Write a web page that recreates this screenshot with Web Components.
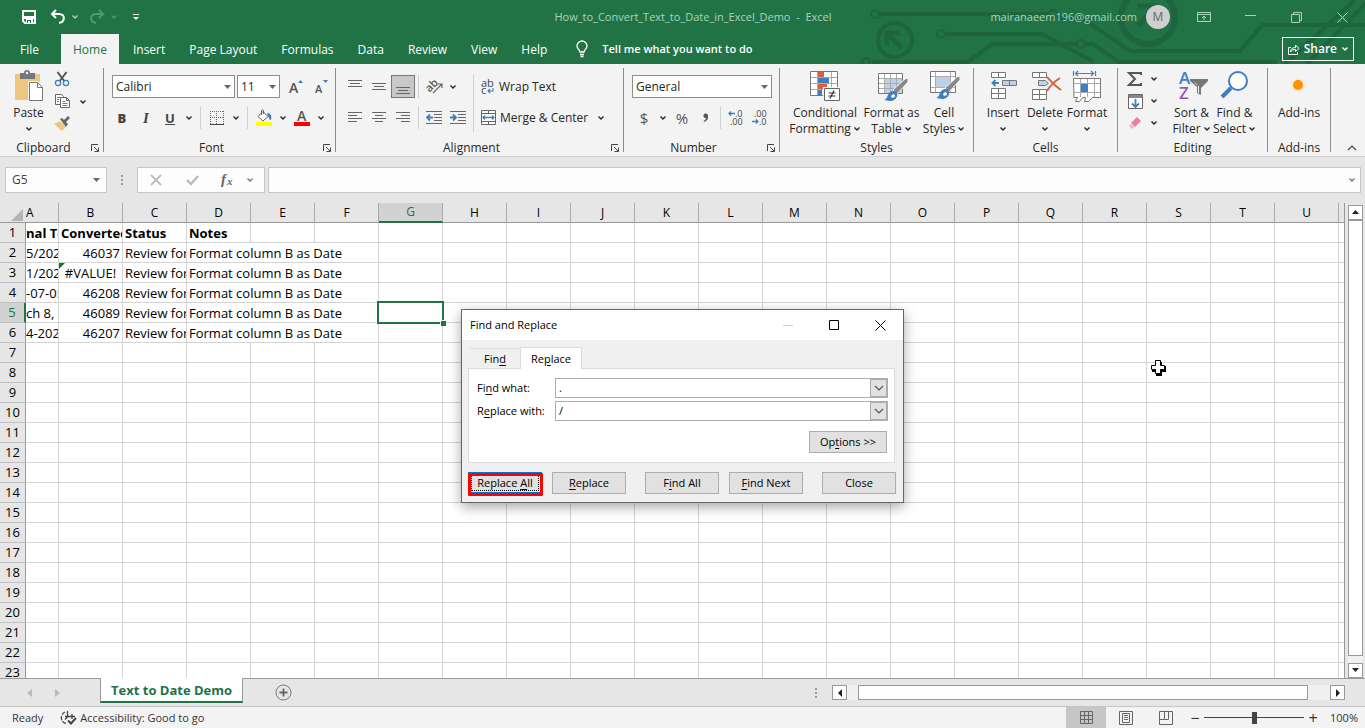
<!DOCTYPE html>
<html lang="en">
<head>
<meta charset="utf-8">
<title>How_to_Convert_Text_to_Date_in_Excel_Demo - Excel</title>
<style>
    html, body {
        height: 100%;
        margin: 0;
    }
    body {
        --green: #217346;
        --edge: #999999;
        font-family: "Open Sans", "Noto Sans", sans-serif;
        font-size: 12px;
        line-height: 16px;
        color: #262626;
        overflow: hidden;
    }
</style>
</head>
<body>
<excel-app></excel-app>

<script>
// Icons: [width, height, svg content]
const ICONS = {
    save: [16, 16, '<path fill="none" stroke="#fff" stroke-width="2" d="M2 2h12v12H4l-2-2z"/><path fill="#fff" d="M2 7h12v3H2zM5 10h7v4H5z"/><path fill="#217346" d="M6 11h4v3H6z"/><path fill="#fff" d="M7 12h2v2H7z"/>'],
    undo: [16, 16, '<path fill="none" stroke="#fff" stroke-width="2" d="M6 1L2 5l4 4M2 5h7c7 0 6 8 0 9"/>'],
    redo: [16, 16, '<path fill="none" stroke="#4f9a70" stroke-width="2" d="M10 1l4 4-4 4M14 5H7c-7 0-6 8 0 9"/>'],
    customize: [8, 8, '<path stroke="#fff" d="M1 1.500h6"/><path fill="#fff" d="M1 4h6L4 7z"/>'],
    chevron: [8, 6, '<path fill="none" stroke="currentColor" stroke-width="1.400" d="M1.500 1.500L4 4l2.500-2.500"/>'],
    chevronUp: [10, 6, '<path fill="none" stroke="#444" stroke-width="1.200" d="M1 5l4-4 4 4"/>'],
    arrow: [7, 4, '<path fill="#666" d="M0 0h7L3.500 4z"/>'],
    bulb: [14, 18, '<path fill="none" stroke="#fff" stroke-width="1.300" d="M5 12c0-2-3-3-3-6a5 5 0 0 1 10 0c0 3-3 4-3 6zM5 14.500h4M5.500 16.500h3"/>'],
    share: [13, 13, '<path fill="none" stroke="#fff" d="M4 4.500H1.500v7h9V9M3.500 9c0-3 2-4.500 5-4.500V2L12 5.500 8.500 8.500V6.500c-2 0-4 .5-5 2.500z"/>'],
    ribbonOptions: [14, 12, '<g fill="none" stroke="#a9d3bb"><path d="M.5 1.500h13v9H.5zM.5 3.500h13M7 9.500v-4M5 7l2-2 2 2"/></g>'],
    minimize: [11, 11, '<path stroke="#a9d3bb" d="M0 3.500h11"/>'],
    restore: [11, 11, '<path fill="none" stroke="#a9d3bb" d="M.5 2.500h8v8h-8zM2.500 2.500v-2h8v8h-2"/>'],
    close: [11, 11, '<path stroke="#a9d3bb" d="M.5.5l10 10M10.500.5l-10 10"/>'],
    paste: [30, 32, '<path fill="#edc77f" d="M1 4h25v26H1z"/><path fill="#777" d="M6 3h4a3 3 0 0 1 6 0h5v6H6z"/><circle cx="13" cy="3" r="1.200" fill="#f3f3f3"/><path fill="#fff" stroke="#f3f3f3" stroke-width="3" d="M15.500 12.500h8l5 5v13h-13z"/><path fill="#fff" stroke="#777" d="M15.500 12.500h8l5 5v13h-13zM23.500 12.500v5h5"/>'],
    cut: [16, 16, '<path stroke="#555" stroke-width="2" d="M3.500 1l7.500 10M12.500 1L5 11"/><g fill="#f3f3f3" stroke="#3f7fbf" stroke-width="1.300"><circle cx="4" cy="12" r="2.600"/><circle cx="12" cy="12" r="2.600"/></g>'],
    copy: [16, 16, '<g fill="#fff" stroke="#666"><path d="M1.500 1.500h6l2 2v8h-8z"/><path d="M6.500 4.500h6l3 3v7h-9zM12.500 4.500v3h3"/></g><path stroke="#3f7fbf" d="M3 4.500h3M3 6.500h2M3 8.500h2M8.500 8.500h3M8.500 10.500h5M8.500 12.500h5"/>'],
    painter: [16, 16, '<path fill="#edc77f" d="M0 9l6-3 6 6-4 4z"/><path fill="#666" d="M6 4l2-1 2 2 4-4 2 2-4 4 2 2-2 3z"/>'],
    grow: [14, 16, '<text x="0" y="14" font-family="Open Sans" font-size="14" font-weight="600" fill="#555">A</text><path fill="#3f7fbf" d="M9 4h5L11.500 1z"/>'],
    shrink: [14, 16, '<text x="0" y="14" font-family="Open Sans" font-size="11" font-weight="600" fill="#555">A</text><path fill="#3f7fbf" d="M8 1h5L10.500 4z"/>'],
    border: [14, 14, '<path fill="none" stroke="#666" stroke-dasharray="1 1" d="M.5 0v13M6.500 0v13M13.500 0v13M0 .5h14M0 6.500h14"/><path stroke="#444" stroke-width="1" d="M0 13.500h14"/>'],
    fill: [16, 17, '<path fill="#fff" stroke="#666" d="M2 7.500l5-5 5 5-5 4.500zM5.500 6V1.500c0-1 2-1 2 0V5"/><path fill="#3f7fbf" d="M11 4c4 0 5 3 4 7-2 0-2-3-3-4z"/><path fill="#ff0" d="M0 13h16v4H0z"/>'],
    fontColor: [16, 17, '<text x="3" y="12" font-family="Open Sans" font-size="14" font-weight="600" fill="#555">A</text><path fill="#f00" d="M0 13h16v4H0z"/>'],
    alignTop: [14, 14, '<path stroke="#666" d="M0 .5h14M2 3.500h10M0 6.500h14"/>'],
    alignMiddle: [14, 14, '<path stroke="#666" d="M0 3.500h14M2 6.500h10M0 9.500h14"/>'],
    alignBottom: [14, 14, '<path stroke="#666" d="M0 7.500h14M2 10.500h10M0 13.500h14"/>'],
    alignLeft: [14, 14, '<path stroke="#666" d="M0 1.500h14M0 4.500h9M0 7.500h14M0 10.500h9"/>'],
    alignCenter: [14, 14, '<path stroke="#666" d="M0 1.500h14M3 4.500h8M0 7.500h14M3 10.500h8"/>'],
    alignRight: [14, 14, '<path stroke="#666" d="M0 1.500h14M5 4.500h9M0 7.500h14M5 10.500h9"/>'],
    orientation: [17, 17, '<text x="0" y="12" font-family="Open Sans" font-size="11" font-weight="600" fill="#555" transform="rotate(-45 5 9)">ab</text><path fill="none" stroke="#666" stroke-width="1.200" d="M7 15l9-9M12 6h4v4"/>'],
    outdent: [16, 14, '<path stroke="#666" d="M0 .5h16M8 3.500h8M8 6.500h8M8 9.500h8M0 12.500h16"/><path fill="none" stroke="#3f7fbf" stroke-width="1.800" d="M7 6.500H1M4 3.500l-3 3 3 3"/>'],
    indent: [16, 14, '<path stroke="#666" d="M0 .5h16M8 3.500h8M8 6.500h8M8 9.500h8M0 12.500h16"/><path fill="none" stroke="#3f7fbf" stroke-width="1.800" d="M0 6.500h6M3 3.500l3 3-3 3"/>'],
    wrap: [14, 16, '<g font-family="Open Sans" font-size="11" fill="#444"><text x="0" y="8">ab</text><text x="0" y="15">c</text></g><path fill="none" stroke="#3f7fbf" stroke-width="1.200" d="M12 9v3H7M9 10l-2 2 2 2"/>'],
    merge: [15, 15, '<path fill="#fff" stroke="#666" d="M.5.5h14v14H.5zM.5 3.500h14M.5 11.500h14M7.500.5v3M7.500 11.500v3"/><path fill="none" stroke="#3f7fbf" stroke-width="1.300" d="M2 7.500h11M4 5.500l-2 2 2 2M11 5.500l2 2-2 2"/>'],
    comma: [6, 9, '<circle cx="2.700" cy="2.700" r="2.300" fill="#555"/><path fill="#555" d="M5 2.500C5.500 6 4 8 1 9l-.4-1C2.500 7 3 6 3 4z"/>'],
    moreDecimal: [15, 16, '<g font-family="Open Sans" font-size="9" fill="#444"><text x="7" y="7">.0</text><text x="2" y="15">.00</text></g><path fill="none" stroke="#3f7fbf" stroke-width="1.300" d="M7 3.500H1M3 1.500l-2 2 2 2"/>'],
    lessDecimal: [15, 16, '<g font-family="Open Sans" font-size="9" fill="#444"><text x="2" y="7">.00</text><text x="7" y="15">.0</text></g><path fill="none" stroke="#3f7fbf" stroke-width="1.300" d="M0 11.500h6M4 9.500l2 2-2 2"/>'],
    conditional: [32, 32, '<path fill="#fff" stroke="#777" d="M1.500 1.500h27v24h-27z"/><path stroke="#aaa" d="M8.500 2v23M22.500 2v23M2 7.500h26M2 13.500h26M2 19.500h26"/><path fill="#d9603b" d="M9 2h6v5H9zM9 14h9v5H9z"/><path fill="#3f7fbf" d="M9 8h11v5H9zM9 20h4v5H9z"/><path fill="#fff" stroke="#f3f3f3" stroke-width="3" d="M15.500 18.500h15v12h-15z"/><path fill="#fff" stroke="#666" d="M15.500 18.500h15v12h-15z"/><path stroke="#333" stroke-width="1.200" d="M19.500 23h7M19.500 26h7M25 20.500l-4 8"/>'],
    formatTable: [32, 32, '<path fill="#fff" stroke="#777" d="M2.500 3.500h24v20h-24z"/><path fill="#bdd1e8" d="M9 9h17v14H9z"/><path stroke="#aaa" d="M8.500 4v19M14.500 4v19M20.500 4v19M3 8.500h23M3 13.500h23M3 18.500h23"/><path fill="#888" stroke="#f3f3f3" d="M17 20L29 9l3-1v4L21 24z"/><path fill="#3f7fbf" d="M8 30c4 0 3-9 9-9 7 0 5 10-3 10z"/><path fill="#fff" d="M15 27c0-3 4-4 4-1 0 2-3 2-4 1z"/>'],
    cellStyles: [32, 32, '<path fill="#fff" stroke="#777" d="M2.500 1.500h25v21h-25z"/><path fill="#bdd1e8" d="M8 7h14v10H8z"/><path stroke="#aaa" d="M7.500 2v20M22.500 2v20M3 6.500h24M3 17.500h24"/><path fill="#888" stroke="#f3f3f3" d="M17 18L29 7l3-1v4L21 22z"/><path fill="#3f7fbf" d="M8 28c4 0 3-9 9-9 7 0 5 10-3 10z"/><path fill="#fff" d="M15 25c0-3 4-4 4-1 0 2-3 2-4 1z"/>'],
    insertCells: [32, 32, '<g fill="#fff" stroke="#777"><path d="M4.500 2.500h14v5h-14zM11.500 2.500v5M4.500 18.500h14v10h-14zM11.500 18.500v10M4.500 23.500h14"/><path fill="#bdd1e8" d="M15.500 10.500h14v5h-14zM22.500 10.500v5"/></g><path fill="none" stroke="#3f7fbf" stroke-width="1.800" d="M12 13H6M8.500 10L5.500 13l3 3"/>'],
    deleteCells: [32, 32, '<g fill="#fff" stroke="#777"><path d="M3.500 2.500h14v5h-14zM10.500 2.500v5M3.500 19.500h14v10h-14zM10.500 19.500v10M3.500 24.500h14"/><path fill="#bdd1e8" d="M9.500 10.500h7l3 3-3 2h-7z"/></g><path fill="none" stroke="#d9603b" stroke-width="2" d="M18 7c3 3 8 9 14 13M31 8c-5 3-10 8-13 13"/>'],
    formatCells: [32, 32, '<path fill="none" stroke="#3f7fbf" stroke-width="1.200" d="M2.500 1v5M24.500 1v5M4 3.500h19M7 1L4.500 3.500 7 6M20 1l2.500 2.500L20 6"/><path fill="#fff" stroke="#777" d="M2.500 8.500h27v19h-8l-4 4h-4l1-4h-3l-3 4h-4l2-4h-3.500z"/><path stroke="#aaa" d="M9.500 9v18M16.500 9v18M23.500 9v18M3 13.500h26M3 22.500h26"/><path fill="#3f7fbf" d="M10 14h7v8h-7z"/>'],
    sum: [16, 16, '<path fill="none" stroke="#555" stroke-width="2" d="M14 4V2H2l6 6-6 6h12v-2"/>'],
    fillDown: [15, 15, '<path fill="#fff" stroke="#666" d="M.5.5h14v14H.5z"/><path fill="#888" d="M1 1h13v3H1z"/><path fill="none" stroke="#3f7fbf" stroke-width="1.800" d="M7.500 5v8M4 9.500L7.500 13 11 9.500"/>'],
    eraser: [14, 14, '<path fill="#e8829a" d="M9 1l4 4-6 6-4-4z"/><path fill="#f4b5c2" d="M3 8l3 3-2 2-3-3z"/>'],
    sort: [32, 32, '<g font-family="Open Sans" font-size="17" font-weight="600"><text x="3" y="14" fill="#3f7fbf">A</text><text x="3" y="29" fill="#9459b5">Z</text></g><path fill="#777" d="M14 9h18v2l-7 7v7l-4-2v-6l-7-6z"/><path fill="#f3f3f3" d="M22 16h1v7h-1zM17 11l5 4h-1z"/>'],
    find: [32, 32, '<circle cx="19" cy="11" r="9" fill="#fff" stroke="#3f7fbf" stroke-width="2"/><path stroke="#3f7fbf" stroke-width="4" d="M12 18L3 27"/>'],
    addins: [32, 32, '<circle cx="15" cy="15" r="7" fill="#ffe3b8" opacity=".6"/><circle cx="15" cy="15" r="5" fill="#ff9100"/>'],
    launcher: [8, 8, '<path fill="none" stroke="#444" d="M.5 7V.5H7M3 3l4 4M3.500 7.500h4v-4"/>'],
    cancel: [12, 10, '<path stroke="#bbb" stroke-width="1.800" d="M1 0l10 10M11 0L1 10"/>'],
    enter: [13, 11, '<path fill="none" stroke="#bbb" stroke-width="2.400" d="M1 5l4 4 7-8"/>'],
    fx: [14, 16, '<text x="0" y="12" font-family="Liberation Serif" font-size="15" font-style="italic" font-weight="bold" fill="#666">f</text><text x="6" y="13" font-family="Liberation Serif" font-size="11" font-style="italic" font-weight="bold" fill="#666">x</text>'],
    dots: [2, 10, '<path fill="#999" d="M0 0h2v2H0zM0 4h2v2H0zM0 8h2v2H0z"/>'],
    up: [7, 5, '<path fill="#222" d="M0 4h7L3.500 0z"/>'],
    down: [7, 5, '<path fill="#222" d="M0 0h7L3.500 4z"/>'],
    left: [4, 8, '<path fill="#222" d="M4 0v8L0 4z"/>'],
    right: [4, 8, '<path fill="#222" d="M0 0v8l4-4z"/>'],
    navLeft: [5, 8, '<path fill="#bbb" d="M5 0v8L0 4z"/>'],
    navRight: [5, 8, '<path fill="#bbb" d="M0 0v8l5-4z"/>'],
    addSheet: [17, 17, '<circle cx="8.500" cy="8.500" r="7.500" fill="none" stroke="#777"/><path stroke="#666" stroke-width="1.800" d="M4.500 8.500h8M8.500 4.500v8"/>'],
    accessibility: [17, 16, '<path fill="none" stroke="#444" stroke-width="1.300" d="M5 2C-1 5 1 13 6 13.500" stroke-dasharray="4 1.500"/><path fill="none" stroke="#444" stroke-width="1.300" d="M7.500 1v6M5 6.500h6M7.500 7L5 9.500M12 4v5M10 6.500h5"/><path fill="none" stroke="#444" stroke-width="2" d="M8 10.500l3 3 5-5.500"/>'],
    normalView: [13, 13, '<path fill="none" stroke="#666" d="M.5.5h12v12H.5zM4.500.5v12M8.500.5v12M.5 4.500h12M.5 8.500h12"/>'],
    pageView: [14, 14, '<path fill="none" stroke="#666" d="M.5.5h13v13H.5zM3.500 2.500h7v9h-7zM5 4.500h4M5 6.500h4M5 8.500h4"/>'],
    breakView: [14, 14, '<path fill="none" stroke="#666" d="M.5.5h13v13H.5zM5.500.5v8h-5M5.500 8.500h4v-8"/>'],
    dialogMin: [10, 11, '<path stroke="#ccc" d="M0 5.500h10"/>'],
    dialogMax: [10, 11, '<path fill="none" stroke="#000" d="M.5.5h9v9h-9z"/>'],
    dialogClose: [11, 11, '<path stroke="#000" d="M.5.5l10 10M10.500.5l-10 10"/>'],
    comboArrow: [10, 6, '<path fill="none" stroke="#555" stroke-width="1.200" d="M1 1l4 4 4-4"/>'],
    cursor: [16, 16, '<path fill="#000" d="M6 2h6v4h4v6h-4v4H6v-4H2V6h4z"/><path fill="#fff" stroke="#000" d="M5.500.5h5v5h4v4h-4v4h-5v-4h-4v-4h4z"/>']
};

class UiIcon extends HTMLElement {
    connectedCallback() {
        const [w, h, body] = ICONS[this.getAttribute('name')];
        const root = this.attachShadow({mode: 'open'});
        root.innerHTML = `
            <style>
                :host { display: inline-flex; flex: none; }
                svg { display: block; overflow: visible; }
            </style>
            <svg width="${w}" height="${h}" viewBox="0 0 ${w} ${h}" aria-hidden="true">${body}</svg>
        `;
    }
}
customElements.define('ui-icon', UiIcon);

// Small ribbon button: icon or slotted letter
class ToolButton extends HTMLElement {
    connectedCallback() {
        const icon = this.getAttribute('icon');
        const label = this.getAttribute('label');
        const root = this.attachShadow({mode: 'open'});
        root.innerHTML = `
            <style>
                :host { display: flex; width: 24px; height: 23px; }
                :host([text]) { width: auto; }
                :host([narrow]) { width: 14px; }
                button {
                    display: flex;
                    flex: 1;
                    align-items: center;
                    justify-content: center;
                    gap: 4px;
                    box-sizing: border-box;
                    padding: 0;
                    border: 0;
                    background: none;
                    font: inherit;
                    color: inherit;
                }
                :host([pressed]) button {
                    background: #c8c8c8;
                    border: 1px solid #777;
                }
            </style>
            <button${label ? ` aria-label="${label}"` : ''}>
                ${icon ? `<ui-icon name="${icon}"></ui-icon>` : ''}<slot></slot>
            </button>
        `;
    }
}
customElements.define('tool-button', ToolButton);

// Large ribbon button: 32px icon over one or two lines
class BigButton extends HTMLElement {
    connectedCallback() {
        const second = this.getAttribute('second') || '';
        const chevron = this.hasAttribute('menu') ? '<ui-icon name="chevron"></ui-icon>' : '';
        const root = this.attachShadow({mode: 'open'});
        root.innerHTML = `
            <style>
                :host { display: block; width: 43px; }
                button {
                    display: flex;
                    flex-direction: column;
                    align-items: center;
                    width: 100%;
                    padding: 2px 0 0;
                    border: 0;
                    background: none;
                    font: inherit;
                    color: inherit;
                    white-space: nowrap;
                }
                .first { margin-top: 3px; }
                .second { display: flex; align-items: center; gap: 2px; height: 16px; }
            </style>
            <button>
                <ui-icon name="${this.getAttribute('icon')}"></ui-icon>
                <span class="first"><slot></slot></span>
                <span class="second">${second}${chevron}</span>
            </button>
        `;
    }
}
customElements.define('big-button', BigButton);

class RibbonGroup extends HTMLElement {
    connectedCallback() {
        const label = this.getAttribute('label');
        const root = this.attachShadow({mode: 'open'});
        root.innerHTML = `
            <style>
                :host {
                    display: flex;
                    flex: none;
                    flex-direction: column;
                    box-sizing: border-box;
                    padding: 4px 1px 0 0;
                    background: linear-gradient(#8c8c8c, #8c8c8c) right center / 1px calc(100% - 8px) no-repeat;
                }
                .tools { display: flex; flex: 1; }
                footer { display: flex; align-items: center; height: 16px; text-align: center; }
                span { flex: 1; }
                button { display: flex; align-items: center; justify-content: center; width: 16px; height: 16px; padding: 0; border: 0; background: none; }
            </style>
            <div class="tools"><slot></slot></div>
            <footer>
                <span>${label}</span>
                ${this.hasAttribute('launcher') ? `<button aria-label="${label} settings"><ui-icon name="launcher"></ui-icon></button>` : ''}
            </footer>
        `;
    }
}
customElements.define('ribbon-group', RibbonGroup);

// Drop-down with a triangle
class ComboBox extends HTMLElement {
    connectedCallback() {
        const root = this.attachShadow({mode: 'open'});
        root.innerHTML = `
            <style>
                :host {
                    display: flex;
                    align-items: center;
                    box-sizing: border-box;
                    height: 23px;
                    padding-right: 3px;
                    border: 1px solid #8c8c8c;
                    background: #fff;
                }
                select {
                    flex: 1;
                    min-width: 0;
                    padding: 0 0 0 3px;
                    border: 0;
                    background: none;
                    appearance: none;
                    font: inherit;
                    color: inherit;
                    outline: 0;
                }
            </style>
            <select aria-label="${this.getAttribute('label')}"><option>${this.getAttribute('value')}</option></select>
            <ui-icon name="arrow"></ui-icon>
        `;
    }
}
customElements.define('combo-box', ComboBox);

class TitleBar extends HTMLElement {
    constructor() {
        super();
        const root = this.attachShadow({mode: 'open'});
        root.innerHTML = `
            <style>
                :host {
                    display: block;
                    position: relative;
                    background: var(--green);
                    color: #fff;
                }
                /* Circuit decoration behind the window controls */
                .circuit { position: absolute; top: 0; right: 0; }
                .top, .tabs { position: relative; display: flex; align-items: center; }
                .top { height: 34px; }
                .side { display: flex; flex: 1 1 0; align-items: center; }
                .quick { padding-left: 21px; }
                .end { justify-content: flex-end; }
                .title, .mail { color: #a9d3bb; font-size: 11px; white-space: pre; }
                button { display: flex; align-items: center; justify-content: center; padding: 0; border: 0; background: none; color: inherit; font: inherit; }
                .quick button { height: 24px; }
                .save { width: 16px; margin-right: 13px; }
                .step { gap: 5px; width: 28px; margin-right: 11px; color: #a9d3bb; }
                .step.dim { color: #4f9a70; }
                .customize { width: 10px; margin-left: 3px; }
                .avatar { width: 24px; height: 24px; margin-left: 9px; margin-right: 11px; border-radius: 50%; background: #d0cece; color: #666; }
                .win { width: 46px; height: 30px; }
                .tabs { height: 30px; }
                .tabs a { box-sizing: border-box; height: 30px; padding: 0 12px; line-height: 31px; color: inherit; text-decoration: none; }
                .tabs a.file { width: 61px; padding: 0 0 0 20px; }
                .tabs a.on { margin-right: 2px; background: #f3f3f3; color: var(--green); }
                .tell { gap: 13px; margin-left: 16px; font-size: 11px; font-weight: 600; }
                .share { gap: 4px; height: 24px; margin: 0 11px 0 auto; padding: 0 4px; border: 1px solid #fff; font-weight: 600; }
            </style>
            <svg class="circuit" width="505" height="64" viewBox="0 0 505 64" aria-hidden="true">
                <g fill="none" stroke="#1e643e" stroke-width="4">
                    <circle cx="15" cy="14" r="4" stroke-width="2"/><path d="M20 14h170"/>
                    <circle cx="193" cy="14" r="4" stroke-width="2"/>
                    <circle cx="35" cy="40" r="17"/><path d="M27 45V33h13M29 35l13 13" stroke-width="5"/>
                    <circle cx="81" cy="34" r="4" stroke-width="2"/><path d="M86 34h96l52 28"/>
                    <circle cx="6" cy="62" r="4" stroke-width="2"/><path d="M12 62h96l24-18h85M225 44h8l26 18h158"/>
                    <circle cx="221" cy="44" r="4" stroke-width="2"/>
                    <path d="M198 18h24l48 33h110l22-26h105M425 64l70-64M447 64l60-62"/>
                    <circle cx="288" cy="17" r="27" stroke-width="6"/><path d="M277 6h18v18M294 8l-16 18" stroke-width="5"/>
                </g>
            </svg>
            <div class="top">
                <div class="side quick">
                    <button class="save" aria-label="Save"><ui-icon name="save"></ui-icon></button>
                    <button class="step" aria-label="Undo"><ui-icon name="undo"></ui-icon><ui-icon name="chevron"></ui-icon></button>
                    <button class="step dim" aria-label="Redo"><ui-icon name="redo"></ui-icon><ui-icon name="chevron"></ui-icon></button>
                    <button class="customize" aria-label="Customize"><ui-icon name="customize"></ui-icon></button>
                </div>
                <div class="title">How_to_Convert_Text_to_Date_in_Excel_Demo  -  Excel</div>
                <div class="side end">
                    <span class="mail">mairanaeem196@gmail.com</span>
                    <button class="avatar">M</button>
                    <button class="win" aria-label="Ribbon options"><ui-icon name="ribbonOptions"></ui-icon></button>
                    <button class="win" aria-label="Minimize"><ui-icon name="minimize"></ui-icon></button>
                    <button class="win" aria-label="Restore"><ui-icon name="restore"></ui-icon></button>
                    <button class="win" aria-label="Close"><ui-icon name="close"></ui-icon></button>
                </div>
            </div>
            <nav class="tabs">
                <a class="file" href="#file">File</a>
                <a class="on" href="#home">Home</a>
                <a href="#insert">Insert</a>
                <a href="#layout">Page Layout</a>
                <a href="#formulas">Formulas</a>
                <a href="#data">Data</a>
                <a href="#review">Review</a>
                <a href="#view">View</a>
                <a href="#help">Help</a>
                <button class="tell"><ui-icon name="bulb"></ui-icon>Tell me what you want to do</button>
                <button class="share"><ui-icon name="share"></ui-icon>Share<ui-icon name="chevron"></ui-icon></button>
            </nav>
        `;
    }
}
customElements.define('title-bar', TitleBar);

class RibbonBar extends HTMLElement {
    constructor() {
        super();
        const chev = '<tool-button narrow icon="chevron" label="More"></tool-button>';
        const root = this.attachShadow({mode: 'open'});
        root.innerHTML = `
            <style>
                :host {
                    display: flex;
                    height: 92px;
                    border-bottom: 1px solid #d0d0d0;
                    background: #f3f3f3;
                }
                .rows { display: flex; flex-direction: column; gap: 8px; padding-top: 7px; }
                .row, .stack { display: flex; }
                .stack { flex-direction: column; }
                .stack tool-button { height: 22px; }
                .sep { width: 1px; margin: 0 4px; background: #d0d0d0; }
                .clip { width: 104px; }
                .clip big-button { margin-left: 7px; }
                .clip .more { padding-top: 22px; margin-left: 2px; }
                .font { width: 232px; }
                .font .top { gap: 2px; padding-left: 2px; }
                .font .grow { margin-left: 2px; }
                .font .rows { padding-left: 6px; }
                .align { width: 288px; }
                .align .rows { padding-left: 7px; }
                .align .rows.wide { padding-left: 7px; }
                .align .tall { width: 1px; margin: 6px 0 8px 3px; background: #d0d0d0; }
                .align .sep { margin: 0 3px; }
                .merge { gap: 6px; }
                .number { width: 156px; }
                .number .rows { padding-left: 8px; }
                .number .top { padding-bottom: 0; }
                .number .sep { margin: 0 2px; }
                .styles { width: 194px; }
                .styles big-button { width: 46px; }
                .styles .cond { width: 74px; margin-left: 8px; }
                .styles .table { width: 59px; }
                .cells { width: 144px; }
                .cells big-button { width: 42px; }
                .cells big-button:first-child { margin-left: 8px; }
                .editing { width: 150px; }
                .editing .stack:first-child { margin-left: 5px; }
                .editing .sort { margin-left: 9px; }
                .addins { width: 63px; }
                .addins big-button { width: 62px; }
                .bold { font-weight: 700; font-size: 13px; color: #444; }
                .bold i { font-family: "Liberation Serif", serif; font-size: 15px; }
                .sign { font-size: 15px; color: #555; }
                .collapse { display: flex; align-self: flex-end; margin-left: auto; padding: 0 8px 5px; border: 0; background: none; }
            </style>
            <ribbon-group class="clip" label="Clipboard" launcher>
                <big-button icon="paste" menu>Paste</big-button>
                <div class="stack">
                    <tool-button icon="cut" label="Cut"></tool-button>
                    <tool-button icon="copy" label="Copy"></tool-button>
                    <tool-button icon="painter" label="Format painter"></tool-button>
                </div>
                <div class="more">${chev}</div>
            </ribbon-group>
            <ribbon-group class="font" label="Font" launcher>
                <div class="rows">
                    <div class="row top">
                        <combo-box style="width:123px" label="Font" value="Calibri"></combo-box>
                        <combo-box style="width:43px" label="Font size" value="11"></combo-box>
                        <tool-button class="grow" icon="grow" label="Grow font"></tool-button>
                        <tool-button icon="shrink" label="Shrink font"></tool-button>
                    </div>
                    <div class="row">
                        <tool-button class="bold"><b>B</b></tool-button>
                        <tool-button class="bold"><i>I</i></tool-button>
                        <tool-button class="bold"><u>U</u></tool-button>
                        ${chev}
                        <div class="sep"></div>
                        <tool-button icon="border" label="Borders"></tool-button>
                        ${chev}
                        <div class="sep"></div>
                        <tool-button icon="fill" label="Fill color"></tool-button>
                        ${chev}
                        <tool-button icon="fontColor" label="Font color"></tool-button>
                        ${chev}
                    </div>
                </div>
            </ribbon-group>
            <ribbon-group class="align" label="Alignment" launcher>
                <div class="rows">
                    <div class="row">
                        <tool-button icon="alignTop" label="Top align"></tool-button>
                        <tool-button icon="alignMiddle" label="Middle align"></tool-button>
                        <tool-button icon="alignBottom" label="Bottom align" pressed></tool-button>
                        <div class="sep"></div>
                        <tool-button icon="orientation" label="Orientation"></tool-button>
                        ${chev}
                    </div>
                    <div class="row">
                        <tool-button icon="alignLeft" label="Align left"></tool-button>
                        <tool-button icon="alignCenter" label="Center"></tool-button>
                        <tool-button icon="alignRight" label="Align right"></tool-button>
                        <div class="sep"></div>
                        <tool-button icon="outdent" label="Decrease indent"></tool-button>
                        <tool-button icon="indent" label="Increase indent"></tool-button>
                    </div>
                </div>
                <div class="tall"></div>
                <div class="rows wide">
                    <div class="row"><tool-button text icon="wrap">Wrap Text</tool-button></div>
                    <div class="row merge"><tool-button text icon="merge">Merge &amp; Center</tool-button>${chev}</div>
                </div>
            </ribbon-group>
            <ribbon-group class="number" label="Number" launcher>
                <div class="rows">
                    <combo-box style="width:140px" label="Number format" value="General"></combo-box>
                    <div class="row">
                        <tool-button class="sign">$</tool-button>
                        ${chev}
                        <tool-button class="sign">%</tool-button>
                        <tool-button icon="comma" label="Comma style"></tool-button>
                        <div class="sep"></div>
                        <tool-button icon="moreDecimal" label="Increase decimal"></tool-button>
                        <tool-button icon="lessDecimal" label="Decrease decimal"></tool-button>
                    </div>
                </div>
            </ribbon-group>
            <ribbon-group class="styles" label="Styles">
                <big-button class="cond" icon="conditional" second="Formatting" menu>Conditional</big-button>
                <big-button class="table" icon="formatTable" second="Table" menu>Format as</big-button>
                <big-button icon="cellStyles" second="Styles" menu>Cell</big-button>
            </ribbon-group>
            <ribbon-group class="cells" label="Cells">
                <big-button icon="insertCells" menu>Insert</big-button>
                <big-button icon="deleteCells" menu>Delete</big-button>
                <big-button icon="formatCells" menu>Format</big-button>
            </ribbon-group>
            <ribbon-group class="editing" label="Editing">
                <div class="stack">
                    <tool-button icon="sum" label="AutoSum"></tool-button>
                    <tool-button icon="fillDown" label="Fill"></tool-button>
                    <tool-button icon="eraser" label="Clear"></tool-button>
                </div>
                <div class="stack">${chev}${chev}${chev}</div>
                <big-button class="sort" icon="sort" second="Filter" menu>Sort &amp;</big-button>
                <big-button icon="find" second="Select" menu>Find &amp;</big-button>
            </ribbon-group>
            <ribbon-group class="addins" label="Add-ins">
                <big-button icon="addins">Add-ins</big-button>
            </ribbon-group>
            <button class="collapse" aria-label="Collapse ribbon"><ui-icon name="chevronUp"></ui-icon></button>
        `;
    }
}
customElements.define('ribbon-bar', RibbonBar);

class FormulaBar extends HTMLElement {
    constructor() {
        super();
        const root = this.attachShadow({mode: 'open'});
        root.innerHTML = `
            <style>
                :host { display: flex; align-items: center; height: 46px; padding: 0 4px 0 5px; background: #e6e6e6; color: #444; }
                combo-box, .box { box-sizing: border-box; height: 26px; border: 1px solid #c6c6c6; background: #fdfdfd; }
                combo-box { width: 102px; padding-right: 6px; padding-left: 3px; }
                .dots { width: 30px; display: flex; justify-content: center; }
                .box { display: flex; align-items: center; }
                .keys { width: 128px; margin-right: 3px; }
                .entry { flex: 1; }
                button { display: flex; align-items: center; justify-content: center; width: 36px; height: 24px; padding: 0; border: 0; background: none; color: #777; }
                button.menu { width: 16px; }
                .keys button.menu { width: 8px; }
                input { flex: 1; min-width: 0; border: 0; background: none; font: inherit; outline: 0; }
            </style>
            <combo-box label="Name box" value="G5"></combo-box>
            <div class="dots"><ui-icon name="dots"></ui-icon></div>
            <div class="box keys">
                <button aria-label="Cancel"><ui-icon name="cancel"></ui-icon></button>
                <button aria-label="Enter"><ui-icon name="enter"></ui-icon></button>
                <button aria-label="Insert function"><ui-icon name="fx"></ui-icon></button>
                <button class="menu" aria-label="Functions"><ui-icon name="chevron"></ui-icon></button>
            </div>
            <div class="box entry">
                <input aria-label="Formula">
                <button class="menu" aria-label="Expand formula bar"><ui-icon name="chevron"></ui-icon></button>
            </div>
        `;
    }
}
customElements.define('formula-bar', FormulaBar);

const COLUMNS = 'ABCDEFGHIJKLMNOPQRSTU'.split('');
// Column A is scrolled half out of view, so it holds only the tails of its values
const DATA = [
    ['nal Text', 'Converted', 'Status', 'Notes'],
    ['5/2026', '46037', 'Review for', 'Format column B as Date'],
    ['1/2026', '#VALUE!', 'Review for', 'Format column B as Date'],
    ['-07-05', '46208', 'Review for', 'Format column B as Date'],
    ['ch 8, 2', '46089', 'Review for', 'Format column B as Date'],
    ['4-2026', '46207', 'Review for', 'Format column B as Date']
];

class SheetGrid extends HTMLElement {
    constructor() {
        super();
        const head = COLUMNS.map(c => `<th class="${c === 'G' ? 'on' : ''}${c === 'A' ? 'first' : ''}">${c}</th>`).join('');
        let rows = '';
        for (let r = 1; r <= 23; r++) {
            const data = DATA[r - 1] || [];
            let cells = '';
            for (let c = 0; c < 22; c++) {
                const value = data[c] || '';
                // a long note runs over the two empty cells beside it
                const wide = c === 3 && r > 1 && value;
                const mark = r === 3 && c === 1 ? '<i class="error"></i>' : '';
                const sel = r === 5 && c === 6 ? '<span class="selection"></span>' : '';
                cells += `<td class="c${c}"${wide ? ' colspan="3"' : ''}>${value ? `<div>${value}</div>` : ''}${mark}${sel}</td>`;
                if (wide) c += 2;
            }
            rows += `<tr class="r${r}"><th class="num${r === 5 ? ' on' : ''}">${r}</th>${cells}</tr>`;
        }
        const root = this.attachShadow({mode: 'open'});
        root.innerHTML = `
            <style>
                :host {
                    display: block;
                    min-width: 0;
                    overflow: hidden;
                    border-right: 1px solid var(--edge);
                    background: #fff;
                    color: #000;
                    font-size: 13px;
                    line-height: 19px;
                }
                table { width: 1403px; table-layout: fixed; border-collapse: separate; border-spacing: 0; }
                .w-num { width: 26px; }
                .w-a { width: 33px; }
                tr { height: 20px; }
                th, td { box-sizing: border-box; height: 20px; padding: 0; border: solid #d4d4d4; border-width: 0 1px 1px 0; white-space: nowrap; }
                th { background: #e6e6e6; font-weight: 400; }
                td { position: relative; }
                td div { overflow: hidden; height: 19px; padding: 0 2px; line-height: 20px; }
                thead th { border-color: #ababab; border-bottom-color: var(--edge); font-size: 12px; line-height: 18px; overflow: hidden; }
                thead th.on { border-bottom: 2px solid var(--green); background: #d2d2d2; color: var(--green); }
                thead .first { text-align: left; }
                .num { border-right-color: var(--edge); border-bottom-color: #c0c0c0; }
                .num.on { border-right: 2px solid var(--green); background: #d2d2d2; color: var(--green); }
                .corner svg { display: block; margin: 4px 3px 0 auto; }
                thead .corner { border-right: 0; }
                td.c0 div { padding: 0; }
                .c1 { text-align: right; }
                .r1 td { font-weight: 700; text-align: left; }
                .r3 .c1 { text-align: center; }
                .error { position: absolute; top: 0; left: 0; border: 3px solid; border-color: #107c10 transparent transparent #107c10; }
                .selection { position: absolute; z-index: 1; inset: -2px; border: 2px solid var(--green); }
                .selection::after { content: ""; position: absolute; right: -4px; bottom: -4px; width: 5px; height: 5px; border: solid #fff; border-width: 1px 0 0 1px; background: var(--green); }
            </style>
            <table>
                <colgroup><col class="w-num"><col class="w-a"><col span="21"></colgroup>
                <thead><tr><th class="corner"><svg width="12" height="12"><path fill="#b4b4b4" d="M12 0v12H0z"/></svg></th>${head}<th></th></tr></thead>
                <tbody>${rows}</tbody>
            </table>
        `;
    }
}
customElements.define('sheet-grid', SheetGrid);

class ScrollBar extends HTMLElement {
    connectedCallback() {
        const across = this.hasAttribute('across');
        const root = this.attachShadow({mode: 'open'});
        root.innerHTML = `
            <style>
                :host { display: flex; flex-direction: column; background: #f0f0f0; }
                :host([across]) { flex-direction: row; }
                button { display: flex; flex: none; align-items: center; justify-content: center; box-sizing: border-box; width: 15px; height: 15px; padding: 0; border: 1px solid var(--edge); background: #fff; }
                .thumb { flex: 1; border: 1px solid var(--edge); background: #fff; margin-bottom: 7px; }
                :host([across]) .thumb { margin: 0 22px 0 11px; }
            </style>
            <button aria-label="Scroll back"><ui-icon name="${across ? 'left' : 'up'}"></ui-icon></button>
            <div class="thumb"></div>
            <button aria-label="Scroll forward"><ui-icon name="${across ? 'right' : 'down'}"></ui-icon></button>
        `;
    }
}
customElements.define('scroll-bar', ScrollBar);

class SheetTabs extends HTMLElement {
    constructor() {
        super();
        const root = this.attachShadow({mode: 'open'});
        root.innerHTML = `
            <style>
                :host { display: flex; align-items: center; box-sizing: border-box; height: 29px; padding-left: 15px; border: solid var(--edge); border-width: 1px 0; border-bottom-color: #c6c6c6; background: #e6e6e6; }
                button { display: flex; justify-content: center; padding: 0; border: 0; background: none; }
                .nav { width: 28px; }
                a { align-self: flex-start; box-sizing: border-box; height: 25px; margin: -1px 32px 0 29px; padding: 0 10px; border: solid var(--edge); border-width: 0 1px 0; border-bottom: 2px solid var(--green); background: #fff; color: var(--green); font-size: 13px; font-weight: 700; line-height: 25px; text-decoration: none; white-space: nowrap; }
                ui-icon[name=dots] { margin-left: auto; }
                scroll-bar { width: 38%; margin: 0 20px 0 15px; }
            </style>
            <button class="nav" aria-label="Previous sheet"><ui-icon name="navLeft"></ui-icon></button>
            <button class="nav" aria-label="Next sheet"><ui-icon name="navRight"></ui-icon></button>
            <a href="#sheet">Text to Date Demo</a>
            <button aria-label="New sheet"><ui-icon name="addSheet"></ui-icon></button>
            <ui-icon name="dots"></ui-icon>
            <scroll-bar across></scroll-bar>
        `;
    }
}
customElements.define('sheet-tabs', SheetTabs);

class StatusBar extends HTMLElement {
    constructor() {
        super();
        const root = this.attachShadow({mode: 'open'});
        root.innerHTML = `
            <style>
                :host { display: flex; align-items: center; height: 21px; padding: 0 7px 0 12px; background: #f3f3f3; color: #333; font-size: 11px; }
                button { display: flex; align-items: center; justify-content: center; gap: 3px; height: 21px; padding: 0; border: 0; background: none; color: inherit; font: inherit; }
                .check { margin-left: 17px; margin-right: auto; }
                .view { width: 40px; }
                .view.on { background: #c6c6c6; }
                .zoom { width: 18px; font-size: 16px; }
                input { width: 100px; height: 12px; margin: 0; appearance: none; background: linear-gradient(#444, #444) center / 100% 1px no-repeat; }
                input::-webkit-slider-thumb { appearance: none; width: 5px; height: 12px; background: #444; }
                .level { margin-left: 8px; }
            </style>
            <span>Ready</span>
            <button class="check"><ui-icon name="accessibility"></ui-icon>Accessibility: Good to go</button>
            <button class="view on" aria-label="Normal"><ui-icon name="normalView"></ui-icon></button>
            <button class="view" aria-label="Page layout"><ui-icon name="pageView"></ui-icon></button>
            <button class="view" aria-label="Page break preview"><ui-icon name="breakView"></ui-icon></button>
            <button class="zoom" aria-label="Zoom out">−</button>
            <input type="range" min="0" max="200" value="100" aria-label="Zoom">
            <button class="zoom" aria-label="Zoom in">+</button>
            <button class="level">100%</button>
        `;
    }
}
customElements.define('status-bar', StatusBar);

class FindDialog extends HTMLElement {
    constructor() {
        super();
        const root = this.attachShadow({mode: 'open'});
        root.innerHTML = `
            <style>
                :host { display: block; box-sizing: border-box; width: 443px; border: 1px solid #666; background: #f0f0f0; color: #000; font-size: 11px; box-shadow: 0 4px 12px rgba(0, 0, 0, .35); }
                header { display: flex; align-items: center; height: 30px; padding-left: 8px; background: #fff; }
                header span { margin-right: auto; }
                button { box-sizing: border-box; padding: 0; font: inherit; color: inherit; border: 1px solid #adadad; background: #e1e1e1; }
                header button { display: flex; align-items: center; justify-content: center; width: 46px; height: 30px; border: 0; background: none; }
                .body { padding: 7px 6px 8px; }
                .tabs { display: flex; align-items: flex-end; padding-left: 2px; }
                .tabs button { height: 20px; border-color: #dcdcdc; border-width: 1px 0 0; background: #f0f0f0; width: 50px; }
                .tabs button.on { position: relative; width: 62px; height: 22px; border-width: 1px 1px 0; background: #fff; margin-bottom: -1px; }
                .panel { box-sizing: border-box; width: 427px; padding: 9px 6px 9px 8px; border: 1px solid #dcdcdc; background: #fff; }
                .field { display: flex; align-items: center; margin-bottom: 3px; }
                .field label { width: 78px; }
                .combo { display: flex; flex: 1; box-sizing: border-box; height: 20px; border: 1px solid #abadb3; }
                .combo input { flex: 1; min-width: 0; padding: 0 3px; border: 0; font: inherit; outline: 0; }
                .combo button { display: flex; align-items: center; justify-content: center; width: 17px; }
                .options { display: block; width: 78px; height: 22px; margin: 10px 1px 0 auto; }
                .actions { display: flex; margin-top: 9px; }
                .actions button { width: 74px; height: 22px; margin-right: 10px; }
                .actions .gap { margin-right: 19px; }
                .actions button:last-child { margin: 0; }
                .actions .all { position: relative; border: 2px solid #0078d7; outline: 1px dotted #000; outline-offset: -4px; }
                /* red frame drawn over the default button */
                .all::after { content: ""; position: absolute; inset: -1px -3px -4px -2px; border: 3px solid #f00; border-radius: 1px; }
                u { text-underline-offset: 2px; }
            </style>
            <header>
                <span>Find and Replace</span>
                <button aria-label="Minimize"><ui-icon name="dialogMin"></ui-icon></button>
                <button aria-label="Maximize"><ui-icon name="dialogMax"></ui-icon></button>
                <button aria-label="Close dialog"><ui-icon name="dialogClose"></ui-icon></button>
            </header>
            <div class="body">
                <div class="tabs">
                    <button>Fin<u>d</u></button>
                    <button class="on">Re<u>p</u>lace</button>
                </div>
                <div class="panel">
                    <div class="field">
                        <label for="what">Fi<u>n</u>d what:</label>
                        <div class="combo"><input id="what" value="."><button aria-label="Recent searches"><ui-icon name="comboArrow"></ui-icon></button></div>
                    </div>
                    <div class="field">
                        <label for="with">R<u>e</u>place with:</label>
                        <div class="combo"><input id="with" value="/"><button aria-label="Recent replacements"><ui-icon name="comboArrow"></ui-icon></button></div>
                    </div>
                    <button class="options">Op<u>t</u>ions &gt;&gt;</button>
                </div>
                <div class="actions">
                    <button class="all">Replace <u>A</u>ll</button>
                    <button class="gap"><u>R</u>eplace</button>
                    <button>F<u>i</u>nd All</button>
                    <button class="gap"><u>F</u>ind Next</button>
                    <button>Close</button>
                </div>
            </div>
        `;
    }
}
customElements.define('find-dialog', FindDialog);

class ExcelApp extends HTMLElement {
    constructor() {
        super();
        const root = this.attachShadow({mode: 'open'});
        root.innerHTML = `
            <style>
                :host { display: flex; flex-direction: column; position: relative; height: 100vh; overflow: hidden; }
                title-bar, ribbon-bar, formula-bar, sheet-tabs, status-bar { flex: none; }
                main { display: flex; flex: 1; min-height: 0; background: #e6e6e6; }
                sheet-grid { flex: 1; }
                scroll-bar { flex: none; margin: 2px 2px 0 3px; }
                find-dialog { position: absolute; top: 309px; left: 461px; }
                .pointer { position: absolute; top: 360px; left: 1150px; }
            </style>
            <title-bar></title-bar>
            <ribbon-bar></ribbon-bar>
            <formula-bar></formula-bar>
            <main>
                <sheet-grid></sheet-grid>
                <scroll-bar></scroll-bar>
            </main>
            <sheet-tabs></sheet-tabs>
            <status-bar></status-bar>
            <find-dialog></find-dialog>
            <ui-icon class="pointer" name="cursor"></ui-icon>
        `;
    }
}
customElements.define('excel-app', ExcelApp);
</script>
</body>
</html>
